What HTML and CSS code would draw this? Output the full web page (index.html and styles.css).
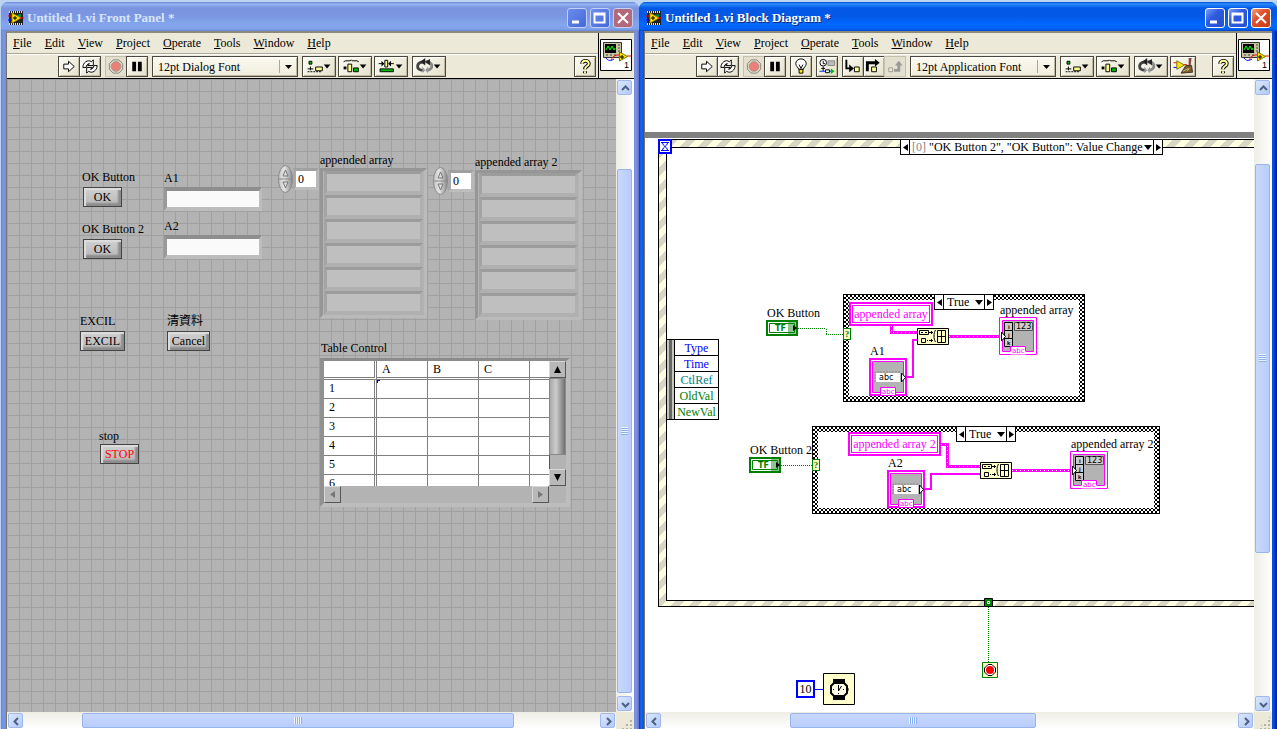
FILE: index.html
```html
<!DOCTYPE html>
<html lang="en">
<head>
    <meta charset="UTF-8">
    <meta name="viewport" content="width=device-width, initial-scale=1.0">
    <title>Untitled 1.vi</title>
    <link rel="stylesheet" href="styles.css">
</head>
<body>
    <!-- shared icons -->
    <svg class="defs" width="0" height="0" aria-hidden="true">
        <linearGradient id="metal">
            <stop offset="0" stop-color="#c4c4c4"/>
            <stop offset=".4" stop-color="#e4e4e4"/>
            <stop offset="1" stop-color="#888"/>
        </linearGradient>
        <symbol id="spin" viewBox="0 0 15 28">
            <ellipse cx="7.500" cy="14" rx="7" ry="13.500" fill="url(#metal)" stroke="#8a8a8a"/>
            <path d="M1 14h13" stroke="#888"/>
            <path d="M5 11l2.500-6 2.500 6zM5 17l2.500 6 2.500-6z" fill="#ddd" stroke="#777"/>
        </symbol>
        <symbol id="vi" viewBox="0 0 16 16">
            <path d="M1 1h14v14H1z" fill="#222"/>
            <path d="M1 2h14M1 14h14" stroke="#ddd" stroke-width="2" stroke-dasharray="1 1"/>
            <path d="M8 5l5 -1v5z" fill="#084"/>
            <path d="M4 3l9 5-9 5z" fill="#ffe600" stroke="#a80" />
            <path d="M5 8h4M7 6v4" stroke="#000"/>
            <path d="M0 6h4M12 8h4" stroke="#f00"/>
            <path d="M0 10h4" stroke="#00f"/>
        </symbol>
        <symbol id="conn" viewBox="0 0 32 32">
            <path d="M.5 .5h31v31H.5z" fill="#fff" stroke="#000"/>
            <path d="M3.500 3.500h18v15h-18z" fill="#c8c4a0" stroke="#333"/>
            <path d="M5 5h11v9H5z" fill="#000"/>
            <path d="M6 11l2-4 2 4 2-4 2 4 1-2" fill="none" stroke="#0f0"/>
            <path d="M18 6h2M18 9h2M18 12h2M6 16h2M10 16h2M14 16h2" stroke="#444"/>
            <path d="M6 19c2 3 5 3 8 1" fill="none" stroke="#00f"/>
            <path d="M11 21c3-5 5-5 9-5M27 17h4" fill="none" stroke="#f00"/>
            <path d="M19.500 13v9l8-4.500z" fill="#ffe600" stroke="#770"/>
            <path d="M20 18h4M22 16v4" stroke="#000"/>
            <text x="24" y="29" class="conn-no">1</text>
        </symbol>
        <symbol id="run" viewBox="0 0 20 20">
            <path d="M4.500 7.500h5v-3l6 5.500-6 5.500v-3h-5z" fill="#fff" stroke="#000"/>
        </symbol>
        <symbol id="loop" viewBox="0 0 20 20">
            <path d="M2.500 11c0-5 5-9 9-6l2-2v6h-6l2-2C7 7 6 9 6 11z" fill="#fff" stroke="#000"/>
            <path d="M17.500 9c0 5-5 9-9 6l-2 2v-6h6l-2 2c2 0 3.500-2 3.500-4z" fill="#fff" stroke="#000"/>
        </symbol>
        <symbol id="abort" viewBox="0 0 20 20">
            <path d="M7 3h6l4 4v6l-4 4H7l-4-4V7z" fill="#d8d4c4" stroke="#8c897c"/>
            <circle cx="10" cy="10" r="5" fill="#ea8078" stroke="#b09088"/>
        </symbol>
        <symbol id="pause" viewBox="0 0 20 20">
            <path d="M5 5h4v10H5zM11 5h4v10h-4z"/>
        </symbol>
        <symbol id="bulb" viewBox="0 0 20 20">
            <path d="M7.500 13c0-2-3-3-3-6a5.500 5 0 0 1 11 0c0 3-3 4-3 6z" fill="#fff" stroke="#000"/>
            <path d="M8 8l2 4 2-4" fill="none" stroke="#000"/>
            <path d="M8 13h4v4H8z" fill="#ffe600" stroke="#000"/>
        </symbol>
        <symbol id="retain" viewBox="0 0 20 20">
            <circle cx="6" cy="6" r="3.500" fill="#fff" stroke="#000"/>
            <path d="M6 4v3h2M6 10v5M4 12h4" fill="none" stroke="#000"/>
            <path d="M11 4h7v5h-7z" fill="#bbb" stroke="#888"/>
            <path d="M2 15h13" stroke="#03f"/>
            <path d="M8.500 13.500h4v3h-4z" fill="#fff" stroke="#000"/>
            <path d="M14 12l4 3-4 3z" fill="#0b0"/>
        </symbol>
        <symbol id="into" viewBox="0 0 20 20">
            <path d="M3 3v9h6" fill="none" stroke="#000" stroke-width="2"/>
            <path d="M6 8l5 4-5 4z"/>
            <path d="M11.500 10.500h5v5h-5z" fill="#ffffa0" stroke="#000"/>
        </symbol>
        <symbol id="over" viewBox="0 0 20 20">
            <path d="M3 15V6h9" fill="none" stroke="#000" stroke-width="3"/>
            <path d="M11 2l5 4-5 4z"/>
            <path d="M7.500 10.500h5v5h-5z" fill="#ffffa0" stroke="#000"/>
        </symbol>
        <symbol id="out" viewBox="0 0 20 20">
            <path d="M9 14h5V8" fill="none" stroke="#999" stroke-width="3"/>
            <path d="M10 9l4-5 4 5z" fill="#999"/>
            <path d="M3.500 11.500h4v4h-4z" fill="#f4f0c0" stroke="#999"/>
        </symbol>
        <symbol id="align" viewBox="0 0 32 20">
            <path d="M5.500 4.500h3v3h-3z" fill="#0b0" stroke="#000"/>
            <path d="M4 12.500h6M7 10v4" stroke="#000"/>
            <path d="M4 15.500h15" stroke="#000" stroke-dasharray="2 1"/>
            <path d="M12.500 10.500h7v4h-7z" fill="#ffff90" stroke="#000"/>
            <path d="M21 8h7l-3.500 4z"/>
        </symbol>
        <symbol id="dist" viewBox="0 0 32 20">
            <path d="M4 5l2-1h5l1-1 1 1h5l2 1" fill="none" stroke="#000"/>
            <path d="M4 10h3v3H4z"/>
            <path d="M8.500 7.500h4v8h-4z" fill="#ffff90" stroke="#000"/>
            <path d="M14.500 11.500h5v4h-5z" fill="#0b0" stroke="#000"/>
            <path d="M21 8h7l-3.500 4z"/>
        </symbol>
        <symbol id="resize" viewBox="0 0 32 20">
            <path d="M3 7h5M14 7h5" stroke="#000"/>
            <path d="M6 4l3 3-3 3zM16 4l-3 3 3 3z"/>
            <path d="M9.500 3.500h3v7h-3z" fill="#ffff90" stroke="#000"/>
            <path d="M4.500 12.500h14v3h-14z" fill="#0b0" stroke="#000"/>
            <path d="M21 8h7l-3.500 4z"/>
        </symbol>
        <symbol id="order" viewBox="0 0 32 20">
            <path d="M10 14c-8 0-8-8 0-9" fill="none" stroke="#444" stroke-width="3"/>
            <path d="M12 5c9 0 9 8 2 9" fill="none" stroke="#888" stroke-width="3"/>
            <path d="M12 1L7 5l5 4zM17 2l-5 3 5 4z" fill="#222"/>
            <path d="M9 10l3 4-3 3zM15 10l-3 4 3 3z" fill="#999"/>
            <path d="M21 8h7l-3.500 4z"/>
        </symbol>
        <symbol id="clean" viewBox="0 0 24 20">
            <path d="M2 6h5M12 8h4" stroke="#f00"/>
            <path d="M2 11h5" stroke="#00f"/>
            <path d="M5.500 4v9l8-4.500z" fill="#ffe600" stroke="#770"/>
            <path d="M18 1h3l-1 8h-2z" fill="#844"/>
            <path d="M15 9h6l1 7-12 1z" fill="#7a5a2a" stroke="#432"/>
            <path d="M12 15l6-3M16 15l3-3" stroke="#cb8"/>
        </symbol>
        <symbol id="help" viewBox="0 0 20 20">
            <path d="M7 7c0-4 7-4 7 0 0 3-4 2-4 6M10 15v2" fill="none" stroke="#000" stroke-width="4"/>
            <path d="M7 7c0-4 7-4 7 0 0 3-4 2-4 6M10 15v2" fill="none" stroke="#ffffa0" stroke-width="2"/>
        </symbol>
        <symbol id="chev-u" viewBox="0 0 15 15"><path d="M4 9l3.500-3.500L11 9" fill="none" stroke="#4d6185" stroke-width="2"/></symbol>
        <symbol id="chev-d" viewBox="0 0 15 15"><path d="M4 6l3.500 3.500L11 6" fill="none" stroke="#4d6185" stroke-width="2"/></symbol>
        <symbol id="chev-l" viewBox="0 0 15 15"><path d="M9 4L5.500 7.500 9 11" fill="none" stroke="#4d6185" stroke-width="2"/></symbol>
        <symbol id="chev-r" viewBox="0 0 15 15"><path d="M6 4l3.500 3.500L6 11" fill="none" stroke="#4d6185" stroke-width="2"/></symbol>
        <symbol id="tri-l" viewBox="0 0 9 9"><path d="M7 1v7L2 4.500z"/></symbol>
        <symbol id="tri-r" viewBox="0 0 9 9"><path d="M2 1v7l5-3.500z"/></symbol>
        <symbol id="tri-u" viewBox="0 0 9 9"><path d="M1 8h7L4.500 1z"/></symbol>
        <symbol id="tri-d" viewBox="0 0 9 9"><path d="M1 1h7L4.500 8z"/></symbol>
        <symbol id="tf" viewBox="0 0 32 16">
            <path d="M1 1h30v14H1z" fill="#fff" stroke="#008000" stroke-width="2"/>
            <path d="M3.500 3.500h25v9h-25z" fill="none" stroke="#008000"/>
            <text x="9" y="11" class="tf-text">TF</text>
            <path d="M22 2h8v12h-8z" fill="#008000" opacity=".45"/>
            <path d="M27 5v6l4-3z"/>
        </symbol>
        <symbol id="ctl" viewBox="0 0 38 38">
            <path d="M1 1h36v36H1z" fill="#fff" stroke="#f0f" stroke-width="2"/>
            <path d="M3.500 3.500h31v31h-31z" fill="#b3b3b3" stroke="#f0f"/>
            <path d="M7 15h24v9H7z" fill="#fff"/>
            <path d="M6 24V14h25" fill="none" stroke="#888" stroke-dasharray="2 1"/>
            <text x="10" y="22" class="pix">abc</text>
            <path d="M32.500 15v9l4-4.500z" fill="#fff" stroke="#000"/>
            <path d="M11.500 29.500h15v8h-15z" fill="#fff" stroke="#f0f"/>
            <text x="13" y="36" class="pix pink">abc</text>
        </symbol>
        <symbol id="ind" viewBox="0 0 38 38">
            <path d="M.5 .5h37v37H.5z" fill="#fff" stroke="#f0f"/>
            <path d="M3.500 3.500h31v31h-31z" fill="#b3b3b3" stroke="#f0f"/>
            <path d="M5.500 5.500h8v8h-8zM5.500 13.500h8v8h-8zM5.500 21.500h8v8h-8z" fill="#ccc" stroke="#000"/>
            <text x="9" y="12" class="pix small">i</text>
            <text x="9" y="20" class="pix small">j</text>
            <text x="8" y="28" class="pix small">k</text>
            <path d="M15.500 5.500h18v8h-18z" fill="#ccc" stroke="#555"/>
            <text x="17" y="12" class="pix">123</text>
            <path d="M2.500 15v9l4-4.500z" fill="#fff" stroke="#000"/>
            <path d="M11.500 29.500h15v8h-15z" fill="#fff"/>
            <path d="M11.500 34v-4.500h15V34" fill="none" stroke="#f0f"/>
            <text x="13" y="36" class="pix pink">abc</text>
        </symbol>
        <symbol id="build" viewBox="0 0 32 17">
            <path d="M.5 .5h31v16H.5z" fill="#ffffcc" stroke="#000"/>
            <path d="M2.500 2.500h9v4h-9zM4.500 10.500h4v4h-4zM20.500 2.500h8v12h-8zM24.500 3v11M21 8.500h8" fill="none" stroke="#000"/>
            <path d="M4 4.500h2M8 4.500h2M12 4.500h4M14.500 3v3M10 12.500h1M12 12.500h4M14.500 11v3M18.500 2c-2 3-2 9 0 12" fill="none" stroke="#000"/>
        </symbol>
    </svg>

    <section class="window inactive">
        <header class="title">
            <svg class="vi" width="16" height="16"><use href="#vi"/></svg>
            <h1>Untitled 1.vi Front Panel *</h1>
            <button class="wbtn" aria-label="Minimize"><svg width="18" height="18"><path d="M4 13h7" stroke="#fff" stroke-width="3"/></svg></button>
            <button class="wbtn" aria-label="Maximize"><svg width="18" height="18"><path d="M3.500 4.500h10v9h-10zM3 5.500h11" fill="none" stroke="#fff" stroke-width="2"/></svg></button>
            <button class="wbtn close" aria-label="Close"><svg width="18" height="18"><path d="M4 4l10 10M14 4L4 14" stroke="#fff" stroke-width="2"/></svg></button>
        </header>
        <div class="frame">
            <div class="bars">
                <nav class="menu">
                    <a href="#"><u>F</u>ile</a>
                    <a href="#"><u>E</u>dit</a>
                    <a href="#"><u>V</u>iew</a>
                    <a href="#"><u>P</u>roject</a>
                    <a href="#"><u>O</u>perate</a>
                    <a href="#"><u>T</u>ools</a>
                    <a href="#"><u>W</u>indow</a>
                    <a href="#"><u>H</u>elp</a>
                </nav>
                <div class="toolbar">
                    <div class="joined">
                        <button class="tool" aria-label="Run"><svg width="20" height="19"><use href="#run"/></svg></button>
                        <button class="tool" aria-label="Run Continuously"><svg width="20" height="19"><use href="#loop"/></svg></button>
                    </div>
                    <div class="joined">
                        <button class="tool off" aria-label="Abort" disabled><svg width="20" height="19"><use href="#abort"/></svg></button>
                        <button class="tool" aria-label="Pause"><svg width="20" height="19"><use href="#pause"/></svg></button>
                    </div>
                    <select class="font" aria-label="Text Settings"><option>12pt Dialog Font</option></select>
                    <div class="drops">
                        <button class="tool wide" aria-label="Align Objects"><svg width="32" height="19"><use href="#align"/></svg></button>
                        <button class="tool wide" aria-label="Distribute Objects"><svg width="32" height="19"><use href="#dist"/></svg></button>
                        <button class="tool wide" aria-label="Resize Objects"><svg width="32" height="19"><use href="#resize"/></svg></button>
                    </div>
                    <button class="tool wide" aria-label="Reorder"><svg width="32" height="19"><use href="#order"/></svg></button>
                    <button class="tool help" aria-label="Context Help"><svg width="20" height="19"><use href="#help"/></svg></button>
                </div>
            </div>
            <div class="conn"><svg width="32" height="32"><use href="#conn"/></svg></div>
        </div>
        <div class="work">
            <main class="canvas panel">
                <label class="item ok1-label" for="ok1">OK Button</label>
                <button class="item pbtn ok1" id="ok1">OK</button>
                <label class="item ok2-label" for="ok2">OK Button 2</label>
                <button class="item pbtn ok2" id="ok2">OK</button>
                <label class="item a1-label" for="a1">A1</label>
                <input class="item field a1" id="a1" type="text">
                <label class="item a2-label" for="a2">A2</label>
                <input class="item field a2" id="a2" type="text">
                <label class="item excil-label" for="excil">EXCIL</label>
                <button class="item pbtn excil" id="excil">EXCIL</button>
                <label class="item cancel-label" for="cancel" lang="zh-Hant">清資料</label>
                <button class="item pbtn cancel" id="cancel">Cancel</button>
                <label class="item stop-label" for="stop">stop</label>
                <button class="item pbtn stop" id="stop">STOP</button>

                <div class="item index idx1">
                    <svg width="15" height="28"><use href="#spin"/></svg>
                    <input type="text" value="0" aria-label="appended array index">
                </div>
                <div class="item arr-label1">appended array</div>
                <div class="item array arr1"><i></i><i></i><i></i><i></i><i></i><i></i></div>

                <div class="item index idx2">
                    <svg width="15" height="28"><use href="#spin"/></svg>
                    <input type="text" value="0" aria-label="appended array 2 index">
                </div>
                <div class="item arr-label2">appended array 2</div>
                <div class="item array arr2"><i></i><i></i><i></i><i></i><i></i><i></i></div>

                <div class="item table-label" id="tlabel">Table Control</div>
                <div class="item grid-ctl">
                    <div class="grid-view">
                        <table aria-labelledby="tlabel">
                            <thead>
                                <tr><th class="rowhead"></th><th>A</th><th>B</th><th>C</th><th></th></tr>
                            </thead>
                            <tbody>
                                <tr><th class="rowhead">1</th><td class="active"></td><td></td><td></td><td></td></tr>
                                <tr><th class="rowhead">2</th><td></td><td></td><td></td><td></td></tr>
                                <tr><th class="rowhead">3</th><td></td><td></td><td></td><td></td></tr>
                                <tr><th class="rowhead">4</th><td></td><td></td><td></td><td></td></tr>
                                <tr><th class="rowhead">5</th><td></td><td></td><td></td><td></td></tr>
                                <tr><th class="rowhead">6</th><td></td><td></td><td></td><td></td></tr>
                            </tbody>
                        </table>
                    </div>
                    <div class="gv">
                        <button aria-label="Row up"><svg width="9" height="9"><use href="#tri-u"/></svg></button>
                        <span class="gthumb"></span>
                        <span class="gtrack"></span>
                        <button aria-label="Row down"><svg width="9" height="9"><use href="#tri-d"/></svg></button>
                    </div>
                    <div class="gh">
                        <button aria-label="Column left" disabled><svg width="9" height="9"><use href="#tri-l"/></svg></button>
                        <button aria-label="Column right" disabled><svg width="9" height="9"><use href="#tri-r"/></svg></button>
                    </div>
                </div>
            </main>
            <div class="scroll vert v-panel">
                <button aria-label="Scroll up"><svg width="15" height="15"><use href="#chev-u"/></svg></button>
                <span class="before"></span><span class="thumb"></span><span class="after"></span>
                <button aria-label="Scroll down"><svg width="15" height="15"><use href="#chev-d"/></svg></button>
            </div>
            <div class="scroll horiz h-panel">
                <button aria-label="Scroll left"><svg width="15" height="15"><use href="#chev-l"/></svg></button>
                <span class="before"></span><span class="thumb"></span><span class="after"></span>
                <button aria-label="Scroll right"><svg width="15" height="15"><use href="#chev-r"/></svg></button>
            </div>
            <div class="grip"></div>
        </div>
    </section>

    <section class="window">
        <header class="title">
            <svg class="vi" width="16" height="16"><use href="#vi"/></svg>
            <h1>Untitled 1.vi Block Diagram *</h1>
            <button class="wbtn" aria-label="Minimize"><svg width="18" height="18"><path d="M4 13h7" stroke="#fff" stroke-width="3"/></svg></button>
            <button class="wbtn" aria-label="Maximize"><svg width="18" height="18"><path d="M3.500 4.500h10v9h-10zM3 5.500h11" fill="none" stroke="#fff" stroke-width="2"/></svg></button>
            <button class="wbtn close" aria-label="Close"><svg width="18" height="18"><path d="M4 4l10 10M14 4L4 14" stroke="#fff" stroke-width="2"/></svg></button>
        </header>
        <div class="frame">
            <div class="bars">
                <nav class="menu">
                    <a href="#"><u>F</u>ile</a>
                    <a href="#"><u>E</u>dit</a>
                    <a href="#"><u>V</u>iew</a>
                    <a href="#"><u>P</u>roject</a>
                    <a href="#"><u>O</u>perate</a>
                    <a href="#"><u>T</u>ools</a>
                    <a href="#"><u>W</u>indow</a>
                    <a href="#"><u>H</u>elp</a>
                </nav>
                <div class="toolbar">
                    <div class="joined">
                        <button class="tool" aria-label="Run"><svg width="20" height="19"><use href="#run"/></svg></button>
                        <button class="tool" aria-label="Run Continuously"><svg width="20" height="19"><use href="#loop"/></svg></button>
                    </div>
                    <div class="joined">
                        <button class="tool off" aria-label="Abort" disabled><svg width="20" height="19"><use href="#abort"/></svg></button>
                        <button class="tool" aria-label="Pause"><svg width="20" height="19"><use href="#pause"/></svg></button>
                    </div>
                    <button class="tool" aria-label="Highlight Execution"><svg width="20" height="19"><use href="#bulb"/></svg></button>
                    <button class="tool" aria-label="Retain Wire Values"><svg width="20" height="19"><use href="#retain"/></svg></button>
                    <div class="joined">
                        <button class="tool" aria-label="Step Into"><svg width="20" height="19"><use href="#into"/></svg></button>
                        <button class="tool" aria-label="Step Over"><svg width="20" height="19"><use href="#over"/></svg></button>
                        <button class="tool off" aria-label="Step Out" disabled><svg width="20" height="19"><use href="#out"/></svg></button>
                    </div>
                    <select class="font" aria-label="Text Settings"><option>12pt Application Font</option></select>
                    <div class="drops">
                        <button class="tool wide" aria-label="Align Objects"><svg width="32" height="19"><use href="#align"/></svg></button>
                        <button class="tool wide" aria-label="Distribute Objects"><svg width="32" height="19"><use href="#dist"/></svg></button>
                    </div>
                    <div class="drops">
                        <button class="tool wide" aria-label="Reorder"><svg width="32" height="19"><use href="#order"/></svg></button>
                        <button class="tool clean" aria-label="Clean Up Diagram"><svg width="24" height="19"><use href="#clean"/></svg></button>
                    </div>
                    <button class="tool help" aria-label="Context Help"><svg width="20" height="19"><use href="#help"/></svg></button>
                </div>
            </div>
            <div class="conn"><svg width="32" height="32"><use href="#conn"/></svg></div>
        </div>
        <div class="work">
            <main class="canvas diagram">
                <div class="item loop-edge"></div>
                <div class="item event"></div>
                <svg class="item timeout" width="14" height="15">
                    <path d="M1 1h12v13H1z" fill="#fff" stroke="#00f" stroke-width="2"/>
                    <path d="M3 3.500h8M3 11.500h8M4.500 4c0 3 5 4 5 7M9.500 4c0 3-5 4-5 7" fill="none" stroke="#00f"/>
                </svg>
                <div class="item selector sel-event">
                    <button aria-label="Previous event"><svg width="9" height="9"><use href="#tri-l"/></svg></button>
                    <span class="case-no">[0]</span>
                    <select aria-label="Event case"><option>"OK Button 2", "OK Button": Value Change</option></select>
                    <button aria-label="Next event"><svg width="9" height="9"><use href="#tri-r"/></svg></button>
                </div>
                <ul class="item node">
                    <li class="blue">Type</li>
                    <li class="blue">Time</li>
                    <li class="teal">CtlRef</li>
                    <li class="green">OldVal</li>
                    <li class="green">NewVal</li>
                </ul>

                <div class="item case case1"></div>
                <div class="item case case2"></div>

                <svg class="item wires" width="100%" height="100%">
                    <!-- boolean -->
                    <g fill="none" stroke="#008000" stroke-dasharray="1 1" shape-rendering="crispEdges">
                        <path d="M153 249.500h28v6h17"/>
                        <path d="M136 386.500h31"/>
                        <path d="M343.500 528v55"/>
                    </g>
                    <!-- string arrays -->
                    <g fill="none" stroke="#f0f" stroke-width="3">
                        <path d="M246.500 247v6.500H272"/>
                        <path d="M304 257.500h50"/>
                        <path d="M296 365.500h6.500v22H335"/>
                        <path d="M367 391.500h58"/>
                    </g>
                    <g fill="none" stroke="#fff" stroke-dasharray="1 3">
                        <path d="M246.500 247v6.500H272"/>
                        <path d="M304 257.500h50"/>
                        <path d="M296 365.500h6.500v22H335"/>
                        <path d="M367 391.500h58"/>
                    </g>
                    <!-- strings -->
                    <g fill="none" stroke="#f0f" stroke-width="2">
                        <path d="M262 298h6v-37h4"/>
                        <path d="M280 410h6v-15h49"/>
                    </g>
                    <path d="M170 610.500h8" stroke="#00f"/>
                </svg>

                <div class="item okb1-label">OK Button</div>
                <svg class="item okb1" width="32" height="16"><use href="#tf"/></svg>
                <div class="item selector sel1">
                    <button aria-label="Previous case"><svg width="9" height="9"><use href="#tri-l"/></svg></button>
                    <select aria-label="Case"><option>True</option></select>
                    <button aria-label="Next case"><svg width="9" height="9"><use href="#tri-r"/></svg></button>
                </div>
                <div class="item cond cond1">?</div>
                <div class="item const const1">appended array</div>
                <div class="item a1t-label">A1</div>
                <svg class="item a1t" width="38" height="38"><use href="#ctl"/></svg>
                <svg class="item build1" width="32" height="17"><use href="#build"/></svg>
                <div class="item ind1-label">appended array</div>
                <svg class="item ind1" width="38" height="38"><use href="#ind"/></svg>

                <div class="item okb2-label">OK Button 2</div>
                <svg class="item okb2" width="32" height="16"><use href="#tf"/></svg>
                <div class="item selector sel2">
                    <button aria-label="Previous case"><svg width="9" height="9"><use href="#tri-l"/></svg></button>
                    <select aria-label="Case"><option>True</option></select>
                    <button aria-label="Next case"><svg width="9" height="9"><use href="#tri-r"/></svg></button>
                </div>
                <div class="item cond cond2">?</div>
                <div class="item const const2">appended array 2</div>
                <div class="item a2t-label">A2</div>
                <svg class="item a2t" width="38" height="38"><use href="#ctl"/></svg>
                <svg class="item build2" width="32" height="17"><use href="#build"/></svg>
                <div class="item ind2-label">appended array 2</div>
                <svg class="item ind2" width="38" height="38"><use href="#ind"/></svg>

                <svg class="item tunnel" width="9" height="9">
                    <path d="M.5 .5h8v8h-8z" fill="#008000" stroke="#000"/>
                    <path d="M3.500 3.500h2v2h-2z" fill="none" stroke="#fff"/>
                </svg>
                <svg class="item stop-if" width="16" height="16">
                    <path d="M.5 .5h15v15H.5z" fill="#ffffcc" stroke="#008000"/>
                    <path d="M6 2.500h4L13.500 6v4L10 13.500H6L2.500 10V6z" fill="#fff" stroke="#000"/>
                    <circle cx="8" cy="8" r="4" fill="#f00"/>
                </svg>
                <div class="item num">10</div>
                <svg class="item wait" width="32" height="32">
                    <path d="M.5 .5h31v31H.5z" fill="#ffffcc" stroke="#000"/>
                    <path d="M10 6h12v5H10zM10 22h12v5H10z"/>
                    <path d="M11 10h10l3 3v7l-3 3H11l-3-3v-7z" fill="#ffffe8" stroke="#000" stroke-width="2"/>
                    <path d="M15.500 12v2M15.500 20v1M10 16.500h1M20 16.500h1M15.500 14v4l3-5M25 15v3" fill="none" stroke="#000"/>
                </svg>
            </main>
            <div class="scroll vert v-diagram">
                <button aria-label="Scroll up"><svg width="15" height="15"><use href="#chev-u"/></svg></button>
                <span class="before"></span><span class="thumb"></span><span class="after"></span>
                <button aria-label="Scroll down"><svg width="15" height="15"><use href="#chev-d"/></svg></button>
            </div>
            <div class="scroll horiz h-diagram">
                <button aria-label="Scroll left"><svg width="15" height="15"><use href="#chev-l"/></svg></button>
                <span class="before"></span><span class="thumb"></span><span class="after"></span>
                <button aria-label="Scroll right"><svg width="15" height="15"><use href="#chev-r"/></svg></button>
            </div>
            <div class="grip"></div>
        </div>
    </section>
</body>
</html>
```
FILE: styles.css
```css
* {
    box-sizing: border-box;
}

body {
    margin: 0;
    padding: 2px 0 0 1px;
    height: 100vh;
    overflow: hidden;
    display: flex;
    background-color: #bcd4f0;
    font-family: "Liberation Serif", "Noto Sans CJK TC", serif;
    font-size: 12px;
    line-height: 14px;
    color: #000;
}

button, input, select {
    font: inherit;
    color: inherit;
    margin: 0;
    padding: 0;
    border-radius: 0;
}

svg {
    display: block;
    flex: none;
}

.defs {
    position: absolute;
}

/* window chrome */
.window {
    flex: 1;
    min-width: 0;
    display: flex;
    flex-direction: column;
    padding: 0 5px;
    border-radius: 7px 7px 0 0;
    background: linear-gradient(90deg, #0831d9, #166aee 2px, #0855dd 5px, #0855dd calc(100% - 5px), #0048e8 calc(100% - 3px), #00138c);
}

.window.inactive {
    background: linear-gradient(90deg, #6a7fd6, #7b97e4 2px, #758cdc 5px, #758cdc calc(100% - 5px), #8296e0 calc(100% - 3px), #5f6ec8);
}

.title {
    display: flex;
    align-items: center;
    gap: 3px;
    height: 29px;
    margin: 0 -5px;
    padding: 2px 6px 0 7px;
    border-radius: 7px 7px 0 0;
    background: linear-gradient(#0450c8, #2a8cff 2px, #0458e6 6px, #0458e6 14px, #0268ff 22px, #0262f4 27px, #0045c8);
}

.inactive .title {
    background: linear-gradient(#6a86d4, #97b4f2 2px, #7b94e0 6px, #7b96e2 14px, #83a6ec 22px, #80a2ea 27px, #6b86d6);
}

.title h1 {
    flex: 1;
    margin: 0;
    font-size: 13px;
    line-height: 16px;
    color: #fff;
    text-shadow: 1px 1px #0a2a80;
    white-space: nowrap;
}

.inactive h1 {
    color: #d8e4f8;
    text-shadow: none;
}

.wbtn {
    display: grid;
    place-items: center;
    width: 20px;
    height: 20px;
    border: 1px solid #fff;
    border-radius: 3px;
    background: linear-gradient(135deg, #7a9cf4, #2e5ce0 40%, #2450d0);
}

.wbtn.close {
    background: linear-gradient(135deg, #f0a080, #e0502c 40%, #c83c10);
}

.inactive .wbtn {
    border-color: #c4d0f4;
    background: linear-gradient(135deg, #6c8cec, #4468dc);
}

.inactive .wbtn.close {
    background: #b4687c;
}

.frame {
    display: flex;
    border-top: 2px solid #8c8a7c;
    border-left: 1px solid #77756a;
    background-color: #ece9d8;
}

.bars {
    flex: 1;
    min-width: 0;
}

.menu {
    display: flex;
    align-items: center;
    gap: 13px;
    height: 21px;
    padding-left: 6px;
    border-bottom: 1px solid #aca899;
}

.menu a {
    color: #000;
    text-decoration: none;
}

.toolbar {
    display: flex;
    align-items: center;
    gap: 4px;
    height: 25px;
    padding: 0 2px 0 51px;
    border-top: 1px solid #fff;
    border-bottom: 1px solid #000;
}

.joined, .drops {
    display: flex;
}

.drops {
    gap: 2px;
}

.joined .tool + .tool {
    margin-left: -1px;
}

.tool {
    display: grid;
    place-items: center;
    flex: none;
    width: 22px;
    height: 21px;
    border: 1px solid #4a483c;
    background: linear-gradient(135deg, #fdfcf4, #e4e0cc);
    box-shadow: inset 1px 1px #fff, inset -1px -1px #bcb8a4;
}

.tool.off {
    border-color: #c4c0b0;
    background: #e4e0d0;
    box-shadow: none;
}

.tool.wide {
    width: 34px;
}

.tool.clean {
    width: 26px;
}

.tool.help {
    margin-left: auto;
}

.font {
    appearance: none;
    flex: 0 1 146px;
    min-width: 0;
    height: 21px;
    padding-left: 5px;
    border: 1px solid #4a483c;
    box-shadow: inset 1px 1px #fff, inset -1px -1px #bcb8a4;
    background: url("data:image/svg+xml,%3Csvg xmlns='http://www.w3.org/2000/svg' width='18' height='19'%3E%3Cpath d='M.5 3v13' stroke='%23aca899'/%3E%3Cpath d='M6 8h7l-3.500 4z'/%3E%3C/svg%3E") right center no-repeat, linear-gradient(#fbfaf0, #f0ecdc);
}

.conn {
    width: 36px;
    padding: 6px 0 0 1px;
    border-left: 1px solid #000;
    border-bottom: 1px solid #000;
}

.conn-no {
    font-size: 9px;
    font-family: "Liberation Sans", sans-serif;
}

.work {
    flex: 1;
    min-height: 0;
    display: grid;
    grid-template-columns: minmax(0, 1fr) 18px;
    grid-template-rows: minmax(0, 1fr) 17px;
    border-left: 1px solid #77756a;
}

/* window scroll bars */
.scroll {
    display: flex;
    gap: 1px;
    padding: 1px;
}

.vert {
    flex-direction: column;
    padding-right: 2px;
    background: linear-gradient(90deg, #eeede5, #fff);
}

.horiz {
    background: linear-gradient(#eeede5, #fff);
}

.scroll button {
    display: grid;
    place-items: center;
    flex: none;
    width: 15px;
    height: 15px;
    border: 1px solid #9fb8ee;
    border-radius: 2px;
    background: linear-gradient(135deg, #dce6fe, #b4cafa);
}

.thumb {
    border: 1px solid #98b4ec;
    border-radius: 2px;
}

.vert .thumb {
    background:
        repeating-linear-gradient(#eef4fe 0 1px, #8cb0f8 1px 2px) center / 7px 8px no-repeat,
        linear-gradient(90deg, #c9d8fc, #b8cdfb);
}

.horiz .thumb {
    background:
        repeating-linear-gradient(90deg, #eef4fe 0 1px, #8cb0f8 1px 2px) center / 8px 7px no-repeat,
        linear-gradient(#c9d8fc, #b8cdfb);
}

.v-panel .before { flex: 72; }
.v-panel .thumb { flex: 526; }
.v-panel .after { flex: 1; }
.h-panel .before { flex: 57; }
.h-panel .thumb { flex: 432; }
.h-panel .after { flex: 84; }
.v-diagram .before { flex: 67; }
.v-diagram .thumb { flex: 390; }
.v-diagram .after { flex: 142; }
.h-diagram .before { flex: 127; }
.h-diagram .thumb { flex: 245; }
.h-diagram .after { flex: 201; }

.grip {
    background: linear-gradient(135deg, #ece9d8 60%, transparent 60%), conic-gradient(#b8b4a2 25%, #ece9d8 0) 0 0 / 4px 4px;
}

/* canvases */
.canvas {
    position: relative;
    overflow: hidden;
}

.item {
    position: absolute;
    white-space: nowrap;
}

.panel {
    background:
        linear-gradient(#a0a0a0 1px, transparent 1px) 0 0 / 12px 12px,
        linear-gradient(90deg, #a0a0a0 1px, #b3b3b3 1px) 0 0 / 12px 12px;
}

.diagram {
    background-color: #fff;
}

/* front panel */
.pbtn {
    height: 20px;
    padding: 0 3px;
    border: 1px solid #444;
    background: linear-gradient(#d0d0d0, #b8b8b8);
    box-shadow: inset 2px 2px 1px #ddd, inset -3px -3px 2px #8c8c8c;
}

.field {
    width: 98px;
    height: 24px;
    padding: 0 2px;
    border: 4px solid;
    border-width: 4px 3px;
    border-color: #8e8e8e #bdbdbd #bdbdbd #999;
    background-color: #fafafa;
}

.ok1-label { left: 75px; top: 91px; }
.ok1 { left: 76px; top: 108px; width: 39px; }
.ok2-label { left: 75px; top: 143px; }
.ok2 { left: 76px; top: 160px; width: 39px; }
.a1-label { left: 157px; top: 92px; }
.a1 { left: 157px; top: 108px; }
.a2-label { left: 157px; top: 140px; }
.a2 { left: 157px; top: 156px; }
.excil-label { left: 73px; top: 235px; }
.excil { left: 73px; top: 252px; width: 45px; }
.cancel-label { left: 160px; top: 235px; }
.cancel { left: 160px; top: 252px; width: 43px; }
.stop-label { left: 92px; top: 350px; }
.stop { left: 93px; top: 365px; width: 39px; color: #f00; }

.index {
    display: flex;
    align-items: center;
}

.index input {
    width: 26px;
    height: 22px;
    padding: 0 2px;
    border: 3px solid;
    border-color: #a0a0a0 #b8b8b8 #bdbdbd #a8a8a8;
    background-color: #fff;
}

.idx1 { left: 271px; top: 86px; }
.idx2 { left: 426px; top: 88px; }
.arr-label1 { left: 313px; top: 74px; }
.arr-label2 { left: 468px; top: 76px; }
.arr1 { left: 313px; top: 89px; }
.arr2 { left: 468px; top: 91px; }

.array {
    width: 107px;
    padding: 0 1px;
    border: 3px solid;
    border-color: #969696 #bababa #bababa #969696;
    background-color: #b3b3b3;
}

.array i {
    display: block;
    height: 24px;
    border: 3px solid;
    border-bottom-width: 4px;
    border-color: #9c9c9c #b0b0b0 #b0b0b0 #a4a4a4;
    background-color: #bfbfbf;
}

.table-label { left: 314px; top: 262px; }

.grid-ctl {
    left: 313px;
    top: 279px;
    display: grid;
    grid-template-columns: 225px 17px;
    grid-template-rows: 125px 17px;
    border: 4px solid;
    border-top-width: 3px;
    border-color: #8c8c8c #bdbdbd #bdbdbd #919191;
    background-color: #b3b3b3;
}

.grid-view {
    overflow: hidden;
    background-color: #fff;
}

table {
    width: 257px;
    table-layout: fixed;
    border-collapse: separate;
    border-spacing: 0;
}

th, td {
    width: 51px;
    height: 19px;
    padding: 0 5px;
    border-right: 1px solid #808080;
    border-bottom: 1px solid #808080;
    font-weight: normal;
    text-align: left;
    vertical-align: top;
    line-height: 16px;
}

thead th {
    border-bottom: 3px double #808080;
}

th.rowhead {
    width: 53px;
    border-right: 3px double #808080;
}

td.active {
    background: linear-gradient(#00c, #00c) 0 0 / 3px 1px no-repeat, linear-gradient(#00c, #00c) 0 0 / 1px 3px no-repeat;
}

.gv, .gh {
    display: flex;
}

.gv {
    flex-direction: column;
}

.gh {
    justify-content: space-between;
}

.gv button, .gh button {
    display: grid;
    place-items: center;
    width: 17px;
    height: 17px;
    border: 1px solid;
    border-color: #d8d8d8 #555 #555 #d8d8d8;
    background-color: #b8b8b8;
}

.gh button {
    fill: #777;
}

.gthumb {
    flex: 77;
    border: 1px solid #888;
    background: linear-gradient(90deg, #a8a8a8, #ccc 40%, #707070);
}

.gtrack {
    flex: 14;
    border-left: 1px solid #555;
}

/* block diagram */
.loop-edge {
    left: 0;
    right: 0;
    top: 53px;
    height: 6px;
    background-color: #808080;
}

.event {
    left: 13px;
    right: -9px;
    top: 60px;
    height: 468px;
    padding: 7px;
    border: 1px solid #000;
    background: linear-gradient(135deg, #ffffe1 25%, #d9d7c4 25% 50%, #ffffe1 50% 75%, #d9d7c4 75%) 0 0 / 18px 18px;
}

.event::before {
    content: "";
    display: block;
    height: 100%;
    border: 1px solid #000;
    background-color: #fff;
}

.timeout { left: 13px; top: 60px; }

.selector {
    display: flex;
    height: 16px;
    border: 1px solid #000;
    background-color: #fff;
}

.selector button {
    display: grid;
    place-items: center;
    width: 9px;
    border: 0;
    background: none;
}

.selector button:first-child {
    border-right: 1px solid #000;
}

.selector button:last-child {
    border-left: 1px solid #000;
}

.selector select {
    appearance: none;
    flex: 1;
    min-width: 0;
    padding-left: 3px;
    border: 0;
    background: url("data:image/svg+xml,%3Csvg xmlns='http://www.w3.org/2000/svg' width='10' height='14'%3E%3Cpath d='M1 5h8l-4 5z'/%3E%3C/svg%3E") right center no-repeat;
}

.case-no {
    padding-left: 2px;
    color: #888;
}

.sel-event { left: 255px; top: 60px; width: 263px; }
.sel1 { left: 289px; top: 215px; width: 60px; }
.sel2 { left: 311px; top: 347px; width: 60px; }

.node {
    left: 22px;
    top: 260px;
    width: 52px;
    margin: 0;
    padding: 0 0 0 7px;
    list-style: none;
    text-align: center;
    border: 1px solid #000;
    border-left: 0;
    background: linear-gradient(90deg, #c8c6b8 2px, #666 2px 5px, #c8c6b8 5px);
}

.node li {
    height: 16px;
    padding-top: 1px;
    border-left: 1px solid #000;
    border-bottom: 1px solid #000;
    background-color: #fff;
}

.node li:last-child {
    border-bottom: 0;
    height: 15px;
}

.blue { color: #00f; }
.teal { color: #008080; }
.green { color: #008000; }

.case {
    padding: 5px;
    border: 1px solid #000;
    background:
        linear-gradient(#fff, #fff) content-box,
        conic-gradient(#000 25%, #fff 0 50%, #000 0 75%, #fff 0) 0 0 / 4px 4px;
}

.case1 { left: 198px; top: 215px; width: 242px; height: 108px; }
.case2 { left: 167px; top: 347px; width: 348px; height: 88px; }

.wires { left: 0; top: 0; }

.const {
    padding: 3px 2px;
    height: 24px;
    border: 2px solid #f0f;
    background-color: #fff;
    box-shadow: inset 0 0 0 1px #fff, inset 0 0 0 2px #f0f;
    color: #f0f;
    text-align: center;
}

.const1 { left: 204px; top: 223px; width: 84px; }
.const2 { left: 203px; top: 353px; width: 93px; }

.cond {
    width: 8px;
    height: 12px;
    border: 1px solid #008000;
    background-color: #ffffcc;
    color: #008000;
    font-size: 9px;
    font-weight: bold;
    line-height: 10px;
    text-align: center;
}

.cond1 { left: 198px; top: 249px; }
.cond2 { left: 167px; top: 380px; }

.okb1-label { left: 122px; top: 227px; }
.okb1 { left: 121px; top: 241px; }
.okb2-label { left: 105px; top: 364px; }
.okb2 { left: 104px; top: 378px; }
.a1t-label { left: 225px; top: 265px; }
.a1t { left: 224px; top: 279px; }
.a2t-label { left: 243px; top: 377px; }
.a2t { left: 242px; top: 391px; }
.build1 { left: 272px; top: 249px; }
.build2 { left: 335px; top: 383px; }
.ind1-label { left: 355px; top: 224px; }
.ind1 { left: 354px; top: 238px; }
.ind2-label { left: 426px; top: 358px; }
.ind2 { left: 425px; top: 372px; }
.tunnel { left: 339px; top: 519px; }
.stop-if { left: 337px; top: 583px; }
.wait { left: 178px; top: 594px; }

.num {
    left: 151px;
    top: 601px;
    width: 19px;
    height: 18px;
    border: 2px solid #00f;
    background-color: #fff;
    text-align: center;
}

.pix {
    font: 8px "DejaVu Sans", sans-serif;
}

.pix.small {
    font: bold 6px "Liberation Sans", sans-serif;
}

.pix.pink {
    fill: #f0f;
    font-size: 7px;
}

.tf-text {
    font: bold 8px "DejaVu Sans", sans-serif;
    fill: #008000;
}
```
